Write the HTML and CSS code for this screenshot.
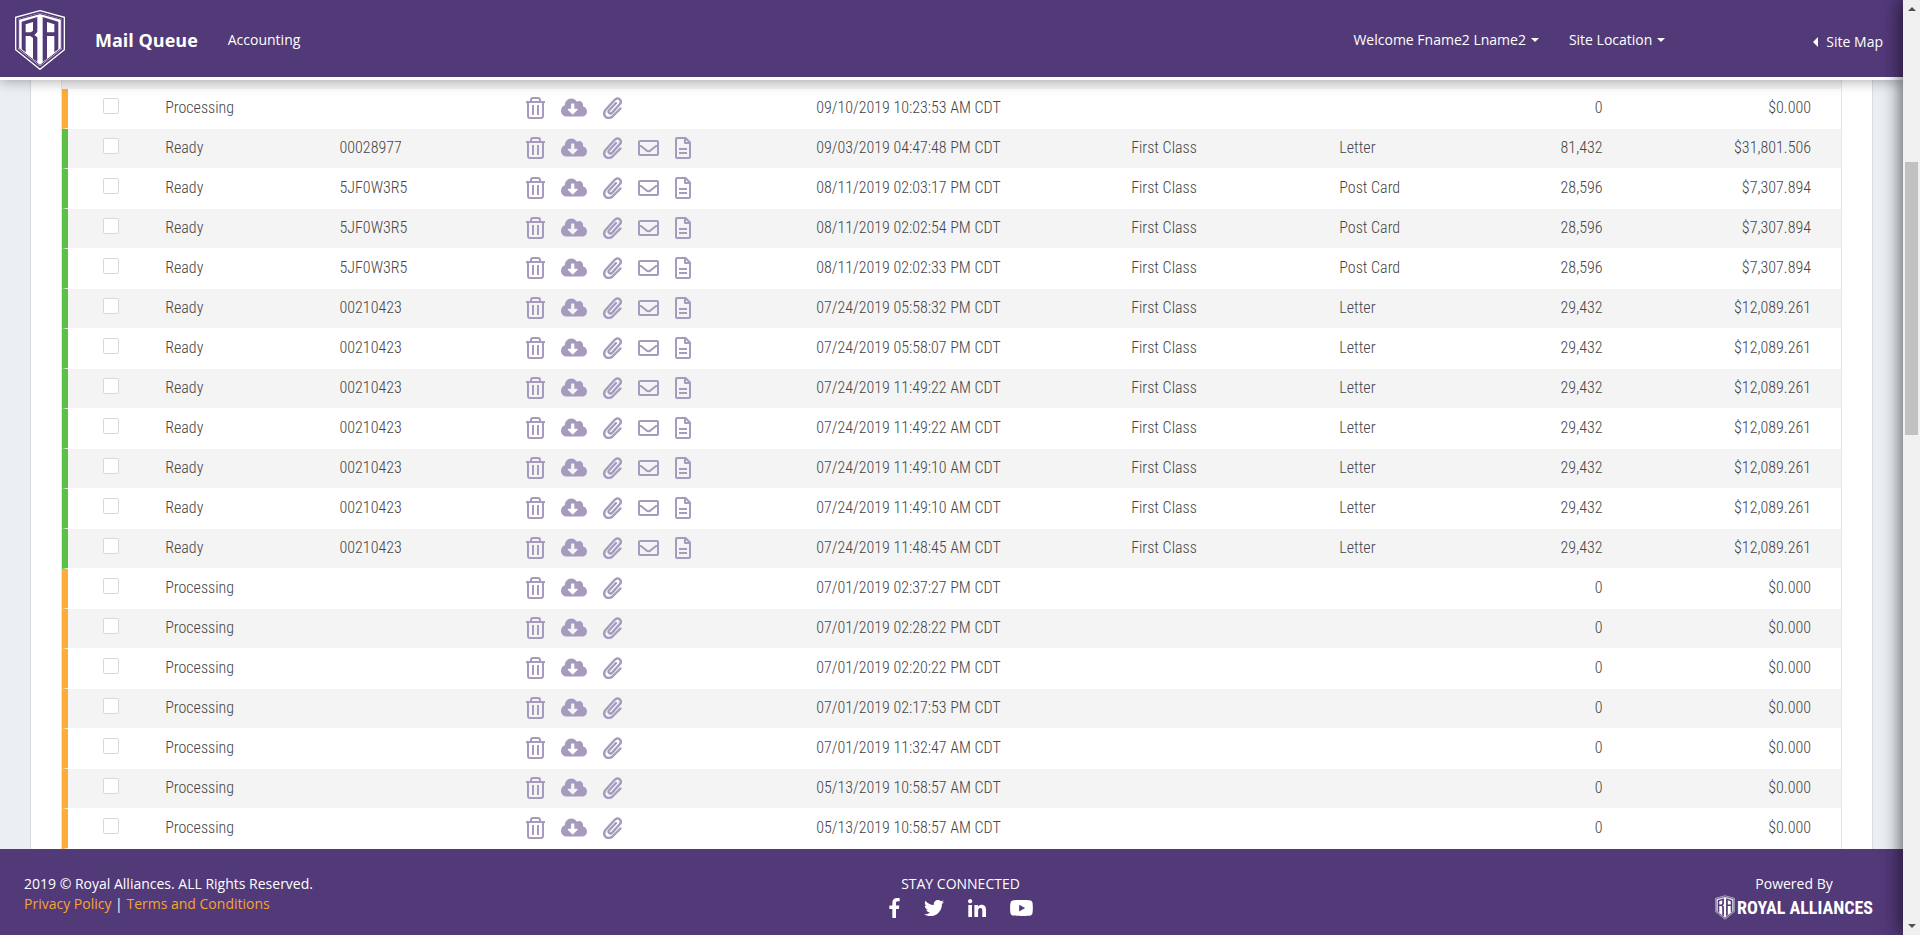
FILE: index.html
```html
<!DOCTYPE html>
<html lang="en">
<head>
<meta charset="utf-8">
<title>Mail Queue</title>
<link rel="stylesheet" href="styles.css">
</head>
<body>
<svg class="sprite" aria-hidden="true">
  <symbol id="shield" viewBox="0 0 150 180">
    <path d="M75 2 148 22V119L75 178 2 119V22Z" fill="none" stroke="currentColor" stroke-width="4"/>
    <path d="M75 9 141 27V116L75 169 9 116V27Z" fill="currentColor"/>
    <path d="M75 11 139 28V115L75 166 11 115V28Z" fill="none" stroke="#523978" stroke-width="3"/>
    <path fill="#523978" d="M20 35 67 21V66L58 75 67 82V156L54 146V84L46 78H32V127L20 118ZM32 43V67H47L54 62V36Z"/>
    <path fill="#523978" d="M83 21 130 35V118L118 127V78H96V146L83 156ZM96 36V67H118V43Z" fill-rule="evenodd"/>
  </symbol>
  <symbol id="trash" viewBox="0 0 19 22">
    <path fill="none" stroke="currentColor" stroke-width="2" d="M0 5H19M2 5V19Q2 21 4 21H15Q17 21 17 19V5M5 5V3Q5 1 7 1H12Q14 1 14 3V5M7 8V18M12 8V18"/>
  </symbol>
  <symbol id="cloud" viewBox="0 32 640 448">
    <path fill="currentColor" d="M537.600 226.600c4.100-10.700 6.400-22.400 6.400-34.600 0-53-43-96-96-96-19.700 0-38.100 6-53.300 16.200C367 64.200 315.300 32 256 32c-88.400 0-160 71.600-160 160 0 2.700.1 5.400.2 8.100C40.200 219.800 0 273.200 0 336c0 79.500 64.500 144 144 144h368c70.700 0 128-57.300 128-128 0-61.900-44-113.600-102.400-125.400zm-132.900 88.700L299.300 420.700c-6.200 6.200-16.400 6.200-22.600 0L171.300 315.300c-10.100-10.100-2.900-27.300 11.300-27.300H248V176c0-8.800 7.200-16 16-16h48c8.800 0 16 7.200 16 16v112h65.400c14.200 0 21.400 17.200 11.300 27.300z"/>
  </symbol>
  <symbol id="clip" viewBox="0 0 19 22">
    <path fill="none" stroke="currentColor" stroke-width="2.400" stroke-linecap="round" stroke-linejoin="round" d="M17.500 11.500 9.500 19.500C7 21.500 3.800 21.500 2.300 19.500S.8 15 2.700 12.800L11.500 3C13 1.200 15.300 .9 16.700 2.300S18.200 5.600 16.700 7.300L9.200 15.600C8.200 16.700 6.900 16.800 6.100 16S5.500 14 6.400 13L13 6"/>
  </symbol>
  <symbol id="mail" viewBox="0 0 21 16">
    <path fill="none" stroke="currentColor" stroke-width="2" stroke-linejoin="round" d="M2 1H19Q20 1 20 2V14Q20 15 19 15H2Q1 15 1 14V2Q1 1 2 1ZM1 4.500 8 10Q10.500 12.500 13 10L20 4.500"/>
  </symbol>
  <symbol id="doc" viewBox="0 0 16 22">
    <path fill="none" stroke="currentColor" stroke-width="2" stroke-linejoin="round" d="M2 1H10.500L15 5.500V20Q15 21 14 21H2Q1 21 1 20V2Q1 1 2 1ZM10 1V6H15M4 12H12M4 16H12"/>
  </symbol>
</svg>
<div class="window">
  <div class="page">
    <header class="topbar">
      <a class="brand" href="#" aria-label="Royal Alliances"><svg><use href="#shield"/></svg></a>
      <nav class="nav">
        <a class="nav-title" href="#">Mail Queue</a>
        <a href="#">Accounting</a>
      </nav>
      <nav class="nav nav-user">
        <button class="drop" type="button">Welcome Fname2 Lname2</button>
        <button class="drop" type="button">Site Location</button>
      </nav>
      <a class="sitemap" href="#">Site Map</a>
    </header>
    <main class="content">
      <div class="card">
        <div class="panel">
          <div class="sliver"></div>
          <table class="queue">
            <colgroup><col class="c-check"><col class="c-status"><col class="c-id"><col class="c-tools"><col class="c-date"><col class="c-class"><col class="c-type"><col class="c-count"><col class="c-cost"></colgroup>
            <tbody id="rows"></tbody>
          </table>
        </div>
      </div>
    </main>
    <footer class="footer">
      <div class="legal">
        <div>2019 © Royal Alliances. ALL Rights Reserved.</div>
        <div><a href="#">Privacy Policy</a> | <a href="#">Terms and Conditions</a></div>
      </div>
      <div class="social">
        <div>STAY CONNECTED</div>
        <div class="social-links">
          <a href="#" aria-label="Facebook"><svg width="11" height="20" viewBox="0 0 264 512"><path d="M76.700 512V283H0v-91h76.700v-71.700C76.700 42.400 124.300 0 193.800 0c33.300 0 61.900 2.500 70.200 3.600V85h-48.200c-37.800 0-45.100 18-45.100 44.300V192H256l-11.700 91h-73.600v229"/></svg></a>
          <a href="#" aria-label="Twitter"><svg width="20" height="20" viewBox="0 0 512 512"><path d="M459.370 151.716c.325 4.548.325 9.097.325 13.645 0 138.720-105.583 298.558-298.558 298.558-59.452 0-114.680-17.219-161.137-47.106 8.447.974 16.568 1.299 25.340 1.299 49.055 0 94.213-16.568 130.274-44.832-46.132-.975-84.792-31.188-98.112-72.772 6.498.974 12.995 1.624 19.818 1.624 9.421 0 18.843-1.300 27.614-3.573-48.081-9.747-84.143-51.980-84.143-102.985v-1.299c13.969 7.797 30.214 12.670 47.431 13.319-28.264-18.843-46.781-51.005-46.781-87.391 0-19.492 5.197-37.360 14.294-52.954 51.655 63.675 129.300 105.258 216.365 109.807-1.624-7.797-2.599-15.918-2.599-24.040 0-57.828 46.782-104.934 104.934-104.934 30.213 0 57.502 12.670 76.670 33.137 23.715-4.548 46.456-13.320 66.599-25.340-7.798 24.366-24.366 44.833-46.132 57.827 21.117-2.273 41.584-8.122 60.426-16.243-14.292 20.791-32.161 39.308-52.628 54.253z"/></svg></a>
          <a href="#" aria-label="LinkedIn"><svg width="18" height="18" viewBox="0 0 448 448"><path d="M100.300 448H7.400V148.900h92.900zM53.800 108.100C24.100 108.100 0 83.500 0 53.800S24.100 0 53.800 0s53.800 24.100 53.800 53.800-24.100 54.300-53.800 54.300zM448 448h-92.700V302.400c0-34.700-.7-79.200-48.300-79.200-48.300 0-55.700 37.700-55.700 76.700V448h-92.800V148.900h89.100v40.800h1.300c12.400-23.500 42.700-48.300 87.900-48.300 94 0 111.300 61.900 111.300 142.300V448z"/></svg></a>
          <a href="#" aria-label="YouTube"><svg width="23" height="16" viewBox="14 64 548 384"><path d="M549.655 124.083c-6.281-23.650-24.787-42.276-48.284-48.597C458.781 64 288 64 288 64S117.220 64 74.629 75.486c-23.497 6.322-42.003 24.947-48.284 48.597-11.412 42.867-11.412 132.305-11.412 132.305s0 89.438 11.412 132.305c6.281 23.650 24.787 41.500 48.284 47.821C117.220 448 288 448 288 448s170.780 0 213.371-11.486c23.497-6.321 42.003-24.171 48.284-47.821 11.412-42.867 11.412-132.305 11.412-132.305s0-89.438-11.412-132.305zm-317.510 213.508V175.185l142.739 81.205-142.739 81.201z"/></svg></a>
        </div>
      </div>
      <div class="powered">
        <div>Powered By</div>
        <div class="wordmark"><svg width="20" height="27"><use href="#shield"/></svg><span>ROYAL ALLIANCES</span></div>
      </div>
    </footer>
  </div>
  <div class="scrollbar" aria-hidden="true">
    <span class="arrow up"></span>
    <span class="track-before"></span>
    <span class="thumb"></span>
    <span class="track-after"></span>
    <span class="arrow down"></span>
  </div>
</div>
<script src="script.js"></script>
</body>
</html>
```
FILE: styles.css
```css
* { box-sizing: border-box; }

body {
  margin: 0;
  font-family: "Open Sans", sans-serif;
  font-size: 14px;
  color: #444;
}

a { color: inherit; text-decoration: none; }

button {
  border: 0;
  padding: 0;
  background: none;
  font: inherit;
  color: inherit;
}

svg { display: block; }

.sprite { position: absolute; width: 0; height: 0; }

.window { display: flex; height: 100vh; overflow: hidden; }

.page { flex: 1; min-width: 0; display: flex; flex-direction: column; }

.topbar {
  position: relative;
  z-index: 1;
  display: flex;
  align-items: center;
  height: 80px;
  flex: none;
  padding: 0 20px 0 15px;
  background: #523978;
  border-bottom: 3px solid #fff;
  box-shadow: 0 2px 12px rgba(0, 0, 0, .3);
  color: #fff;
  font-weight: 500;
}

.brand { margin: 3px 30px 0 0; }
.brand svg { width: 50px; height: 60px; }

.nav { display: flex; align-items: center; gap: 30px; padding-top: 2px; }
.nav-title { font-size: 18px; font-weight: 700; }
.nav-user { margin-left: auto; margin-right: 148px; }

.drop { display: flex; align-items: center; gap: 5px; }
.drop::after {
  content: "";
  border: 4px solid transparent;
  border-top-color: #fff;
  border-bottom: 0;
}

.sitemap { display: flex; align-items: center; gap: 8px; padding-top: 6px; }
.sitemap::before {
  content: "";
  border: 5px solid transparent;
  border-right-color: #fff;
  border-left: 0;
}

.content {
  flex: 1;
  min-height: 0;
  overflow: hidden;
  padding: 0 30px;
  background: #e9eff3;
}

.card {
  min-height: 100%;
  padding: 0 30px;
  background: #fff;
  border: solid #d9dde0;
  border-width: 0 1px;
}

.panel { border: solid #e6e6e6; border-width: 0 1px; }
.sliver { height: 9px; background: #f4f4f4; }

.queue {
  width: 100%;
  table-layout: fixed;
  border-collapse: separate;
  border-spacing: 0;
  font-family: "Roboto Condensed", "Roboto", sans-serif;
  font-size: 16px;
  font-weight: 300;
}

.queue td {
  height: 40px;
  padding: 0 0 2px;
  border-bottom: 1px solid #fff;
  white-space: nowrap;
  vertical-align: middle;
}

.queue tr:nth-child(even) td { background: #f4f4f4; }

.queue .pick { border-left: 6px solid #5bbf48; padding-left: 35px; }
.queue .processing .pick { border-left-color: #fbad38; }
.queue .num { text-align: right; }
.queue .cost { padding-right: 30px; }

.c-check { width: 5.8%; }
.c-status { width: 9.8%; }
.c-id { width: 10.5%; }
.c-tools { width: 16.3%; }
.c-date { width: 17.7%; }
.c-class { width: 11.7%; }
.c-type { width: 9%; }
.c-count { width: 5.8%; }
.c-cost { width: 13.4%; }

.pick input {
  appearance: none;
  display: block;
  width: 16px;
  height: 16px;
  margin: 0 0 3px;
  border: 1px solid #d9d9d9;
  border-radius: 2px;
  background: #fff;
}

.tools { display: flex; align-items: center; gap: 16px; color: #a79abf; }
.trash, .clip { width: 19px; height: 22px; }
.cloud { width: 26px; height: 19px; }
.mail { width: 21px; height: 16px; }
.doc { width: 16px; height: 22px; }

.footer {
  flex: none;
  display: grid;
  grid-template-columns: 1fr auto 1fr;
  padding: 25px 30px 0 24px;
  height: 86px;
  background: #523978;
  color: #fff;
  font-weight: 500;
  line-height: 20px;
}

.legal a { color: #f5a62d; }
.social { margin-left: 24px; text-align: center; }
.social-links { display: flex; align-items: center; gap: 24px; padding-top: 4px; }
.social-links svg { fill: #fff; }

.powered { justify-self: end; text-align: center; }
.wordmark { display: flex; align-items: center; gap: 2px; }
.wordmark span {
  font-family: "Roboto Condensed", "Liberation Sans Narrow", sans-serif;
  font-size: 18px;
  font-weight: 700;
}

.scrollbar {
  position: relative;
  z-index: 2;
  flex: none;
  width: 17px;
  display: flex;
  flex-direction: column;
  align-items: center;
  padding: 7px 0;
  background: #f0f0f0;
  box-shadow: 0 0 20px rgba(0, 0, 0, .8);
}

.arrow { border: 4px solid transparent; }
.up { border-top: 0; border-bottom-color: #505050; }
.down { border-bottom: 0; border-top-color: #505050; }
.thumb { flex: 273; width: 13px; background: #c1c1c1; }
.track-before { flex: 151; }
.track-after { flex: 489; }
```
FILE: script.js
```js
const processing = date => ["Processing", "", date, "", "", "0", "$0.000"];
const ready = (id, date, type, count, cost) => ["Ready", id, date, "First Class", type, count, cost];
const card = date => ready("5JF0W3R5", date, "Post Card", "28,596", "$7,307.894");
const letter = date => ready("00210423", date, "Letter", "29,432", "$12,089.261");

const data = [
  processing("09/10/2019 10:23:53 AM CDT"),
  ready("00028977", "09/03/2019 04:47:48 PM CDT", "Letter", "81,432", "$31,801.506"),
  card("08/11/2019 02:03:17 PM CDT"),
  card("08/11/2019 02:02:54 PM CDT"),
  card("08/11/2019 02:02:33 PM CDT"),
  letter("07/24/2019 05:58:32 PM CDT"),
  letter("07/24/2019 05:58:07 PM CDT"),
  letter("07/24/2019 11:49:22 AM CDT"),
  letter("07/24/2019 11:49:22 AM CDT"),
  letter("07/24/2019 11:49:10 AM CDT"),
  letter("07/24/2019 11:49:10 AM CDT"),
  letter("07/24/2019 11:48:45 AM CDT"),
  processing("07/01/2019 02:37:27 PM CDT"),
  processing("07/01/2019 02:28:22 PM CDT"),
  processing("07/01/2019 02:20:22 PM CDT"),
  processing("07/01/2019 02:17:53 PM CDT"),
  processing("07/01/2019 11:32:47 AM CDT"),
  processing("05/13/2019 10:58:57 AM CDT"),
  processing("05/13/2019 10:58:57 AM CDT")
];

const labels = { trash: "Delete", cloud: "Download", clip: "Attachments", mail: "Mail", doc: "Report" };
const tool = name =>
  `<button type="button" aria-label="${labels[name]}"><svg class="${name}"><use href="#${name}"/></svg></button>`;

document.getElementById("rows").innerHTML = data.map(([status, id, date, cls, type, count, cost]) => {
  const names = status === "Ready" ? ["trash", "cloud", "clip", "mail", "doc"] : ["trash", "cloud", "clip"];
  return `<tr class="${status.toLowerCase()}">
    <td class="pick"><input type="checkbox" aria-label="Select row"></td>
    <td>${status}</td><td>${id}</td>
    <td><div class="tools">${names.map(tool).join("")}</div></td>
    <td>${date}</td><td>${cls}</td><td>${type}</td>
    <td class="num">${count}</td><td class="num cost">${cost}</td>
  </tr>`;
}).join("");
```
